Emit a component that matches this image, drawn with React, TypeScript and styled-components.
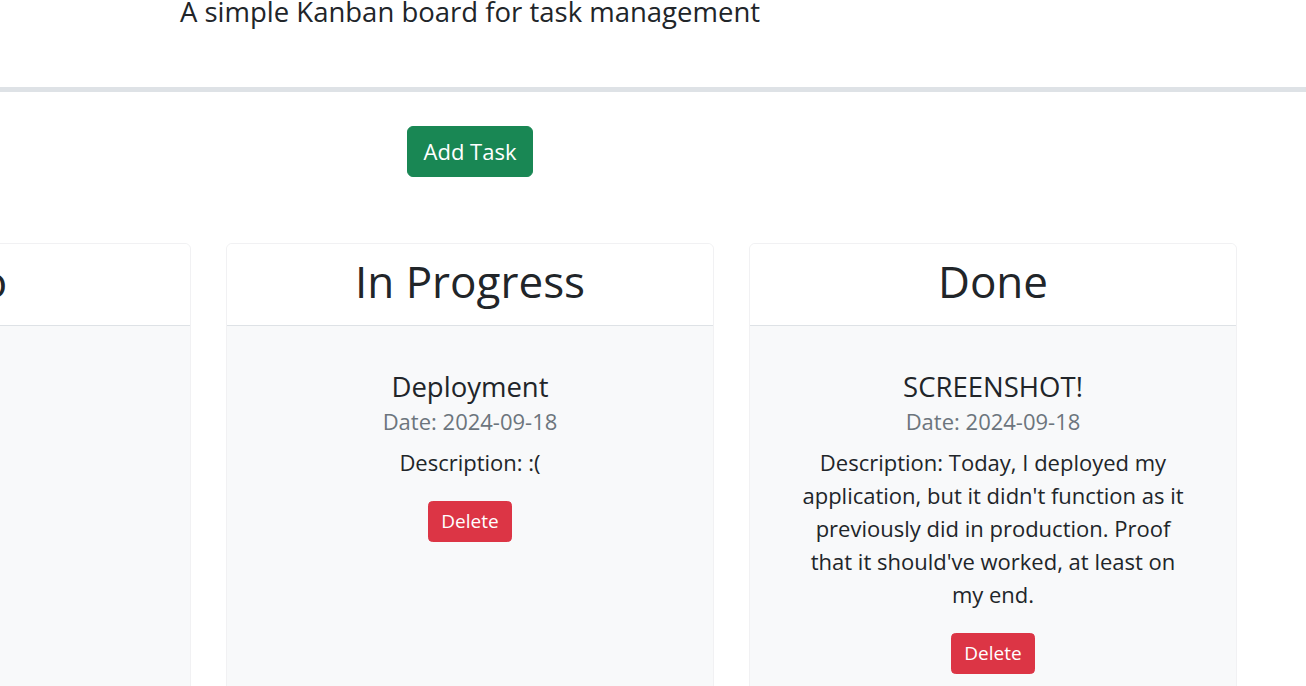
import React from 'react'
import styled, { createGlobalStyle } from 'styled-components'

const GlobalStyle = createGlobalStyle`
    html, body {
        margin: 0;
        padding: 0;
        overflow: hidden;
        background: #fff;
    }
    body {
        font-family: "Open Sans", "Noto Sans", sans-serif;
        font-size: 17.6px;
        line-height: 1.5;
        color: #212529;
    }
`

const Header = styled.header`
    margin-top: -9px;
    padding-bottom: 55px;
    border-bottom: 5px solid #dee2e6;
`

const Inner = styled.div`
    width: 940px;
    display: flex;
    flex-direction: column;
    align-items: center;
`

const Subtitle = styled.p`
    margin: 0;
    font-size: 27.5px;
    font-weight: 400;
    line-height: 41px;
`

const Main = styled(Inner)`
    padding-top: 34px;
`

const Button = styled.button<{ $variant: 'success' | 'danger'; $large?: boolean }>`
    font-family: inherit;
    color: #fff;
    border: 1px solid ${p => (p.$variant === 'success' ? '#198754' : '#dc3545')};
    background: ${p => (p.$variant === 'success' ? '#198754' : '#dc3545')};
    font-size: ${p => (p.$large ? '22px' : '19px')};
    line-height: ${p => (p.$large ? '33px' : '27px')};
    padding: ${p => (p.$large ? '8px 16px' : '6px 12px')};
    border-radius: ${p => (p.$large ? '6px' : '4.5px')};
    cursor: pointer;
`

const Board = styled.div`
    width: 942px;
    margin-top: 66px;
    display: flex;
    justify-content: center;
    gap: 35px;
`

const Column = styled.section`
    box-sizing: border-box;
    flex: 0 0 488px;
    border: 1px solid #f1f1f3;
    border-radius: 6px;
    overflow: hidden;
    background: #f8f9fa;
    min-height: 500px;
`

const ColumnHeader = styled.div`
    background: #fff;
    border-bottom: 1px solid #dee2e6;
    height: 81px;
    display: flex;
    align-items: center;
    justify-content: center;
`

const ColumnTitle = styled.h2`
    margin: 0;
    font-size: 44px;
    font-weight: 400;
    line-height: 1.2;
    padding-bottom: 6px;
`

const ColumnBody = styled.div`
    padding: 44px 16px 26px;
    display: flex;
    flex-direction: column;
    align-items: center;
`

const Task = styled.article`
    width: 390px;
    display: flex;
    flex-direction: column;
    align-items: center;
    text-align: center;
`

const TaskTitle = styled.h4`
    margin: 0;
    font-size: 27.5px;
    font-weight: 400;
    line-height: 33px;
`

const TaskDate = styled.p`
    margin: 2px 0 8px;
    font-size: 22px;
    color: #6c757d;
    line-height: 33px;
`

const TaskDesc = styled.p`
    margin: 0 0 22px;
    font-size: 22px;
    line-height: 33px;
`

type TaskItem = { title: string; date: string; description: string }

const columns: { name: string; tasks: TaskItem[] }[] = [
    { name: 'To Do', tasks: [] },
    {
        name: 'In Progress',
        tasks: [{ title: 'Deployment', date: '2024-09-18', description: ':(' }],
    },
    {
        name: 'Done',
        tasks: [
            {
                title: 'SCREENSHOT!',
                date: '2024-09-18',
                description:
                    "Today, I deployed my application, but it didn't function as it previously did in production. Proof that it should've worked, at least on my end.",
            },
        ],
    },
]

const App = () => {
    return <>
        <GlobalStyle />
        <Header>
            <Inner>
                <Subtitle>A simple Kanban board for task management</Subtitle>
            </Inner>
        </Header>
        <Main>
            <Button $variant="success" $large>Add Task</Button>
            <Board>
                {columns.map(col => (
                    <Column key={col.name}>
                        <ColumnHeader>
                            <ColumnTitle>{col.name}</ColumnTitle>
                        </ColumnHeader>
                        <ColumnBody>
                            {col.tasks.map(t => (
                                <Task key={t.title}>
                                    <TaskTitle>{t.title}</TaskTitle>
                                    <TaskDate>Date: {t.date}</TaskDate>
                                    <TaskDesc>Description: {t.description}</TaskDesc>
                                    <Button $variant="danger">Delete</Button>
                                </Task>
                            ))}
                        </ColumnBody>
                    </Column>
                ))}
            </Board>
        </Main>
    </>
}

export default App
